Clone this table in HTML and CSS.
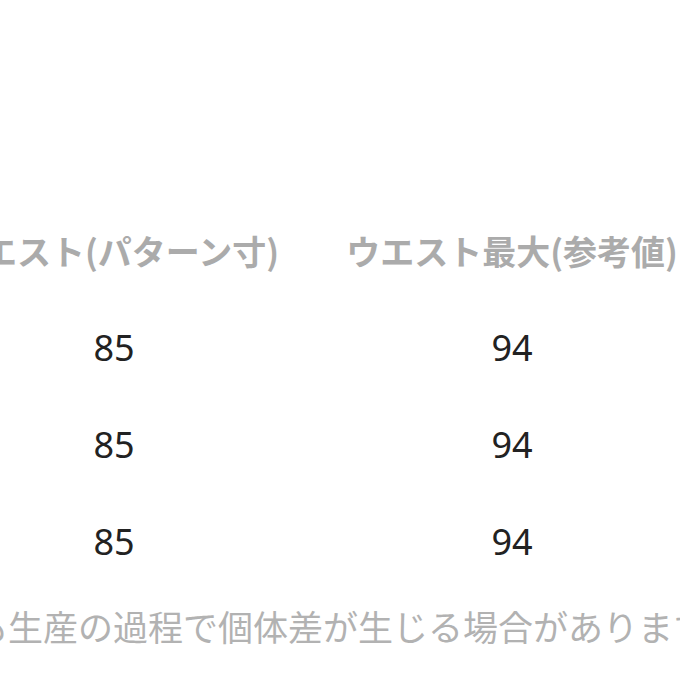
FILE: index.html
```html
<!DOCTYPE html>
<html lang="ja">
<head>
<meta charset="utf-8">
<link rel="stylesheet" href="styles.css">
</head>
<body>
<div class="page">
  <div class="table">
    <div class="row head">
      <div class="cell">ウエスト(パターン寸)</div>
      <div class="cell">ウエスト最大(参考値)</div>
    </div>
    <div class="row">
      <div class="cell num">85</div>
      <div class="cell num">94</div>
    </div>
    <div class="row">
      <div class="cell num">85</div>
      <div class="cell num">94</div>
    </div>
    <div class="row">
      <div class="cell num">85</div>
      <div class="cell num">94</div>
    </div>
  </div>
  <p class="note">も生産の過程で個体差が生じる場合があります。</p>
</div>
</body>
</html>
```
FILE: styles.css
```css
html, body {
  margin: 0;
  padding: 0;
  background: #ffffff;
  overflow: hidden;
}
.page {
  width: 680px;
  height: 680px;
  overflow: hidden;
  position: relative;
  font-family: "Noto Sans CJK JP", "Noto Sans", sans-serif;
}
.table {
  display: flex;
  flex-direction: column;
  margin-left: -85px;
  padding-top: 224px;
  width: 796px;
}
.row {
  display: grid;
  grid-template-columns: 398px 398px;
  height: 97px;
  align-items: center;
}
.row.head {
  height: 52px;
  margin-bottom: 23px;
}
.cell {
  text-align: center;
  white-space: nowrap;
}
.head .cell {
  font-size: 34px;
  font-weight: 700;
  color: #ababab;
}
.num {
  font-family: "Noto Sans", sans-serif;
  font-size: 36px;
  color: #222222;
}
.note {
  margin: 11px 0 0 -27px;
  font-size: 35px;
  color: #b2b2b2;
  white-space: nowrap;
  line-height: 50px;
}
```
